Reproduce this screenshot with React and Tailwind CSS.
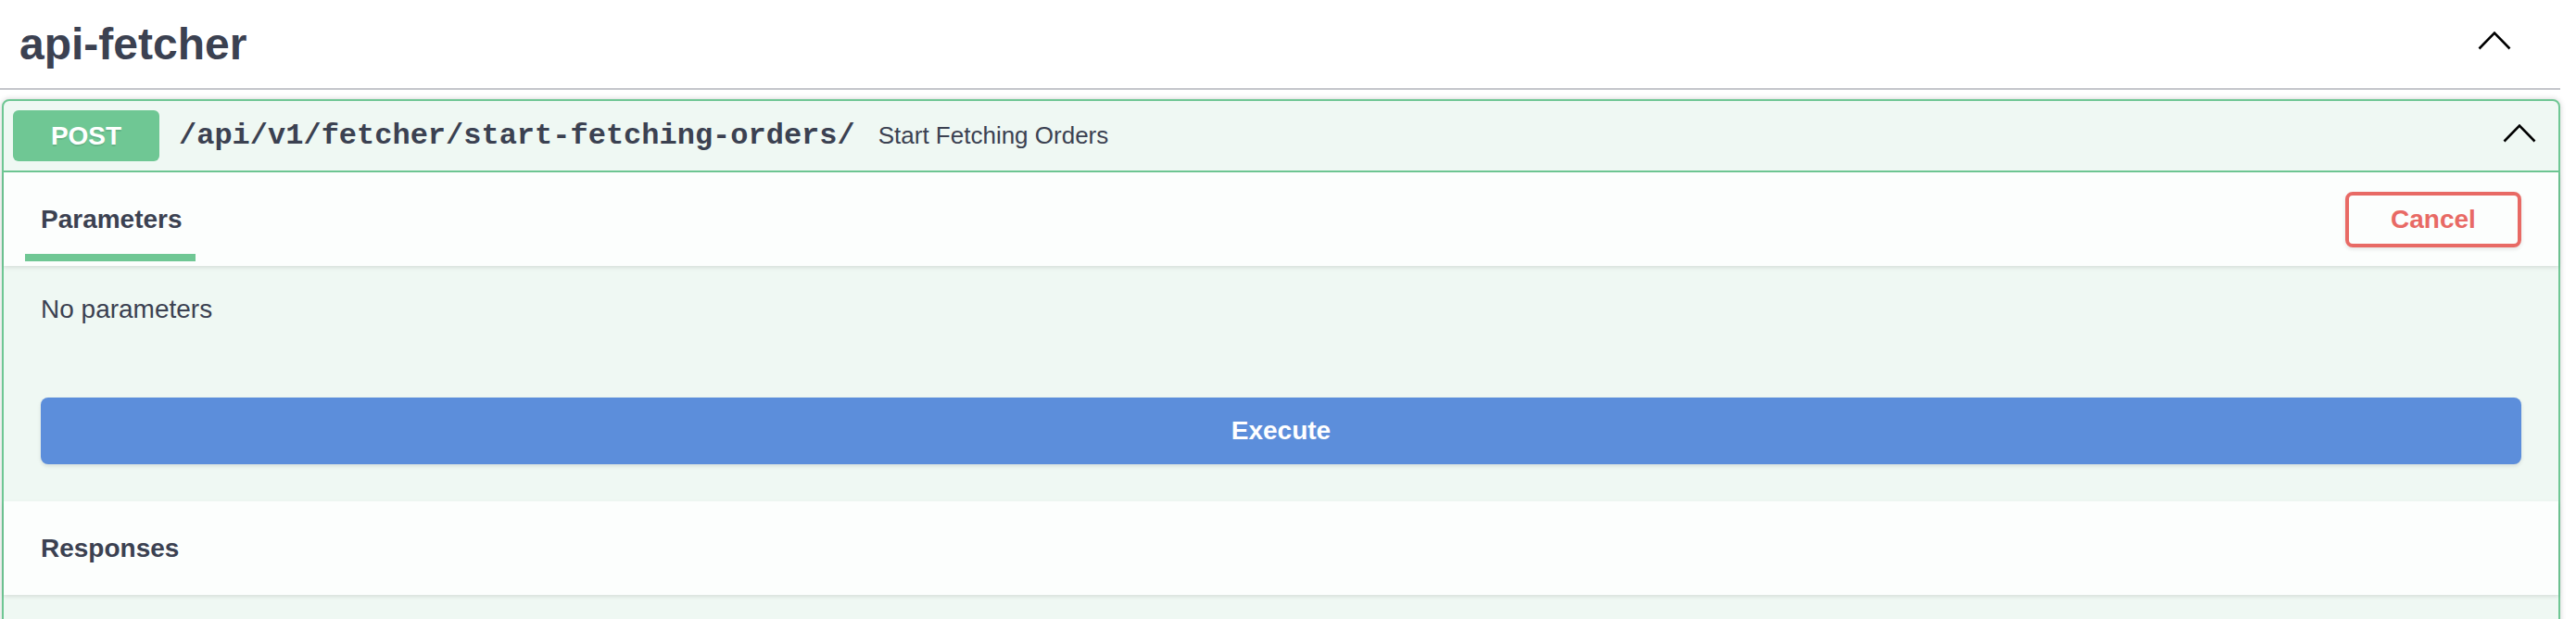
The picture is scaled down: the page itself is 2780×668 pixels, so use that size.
import React from "react";

const Chevron = ({ className }) => (
  <svg
    width="36"
    height="21"
    viewBox="0 0 36 21"
    fill="none"
    className={className}
  >
    <polyline
      points="1.5,19.5 18,2.5 34.5,19.5"
      stroke="#000"
      strokeWidth="2.6"
      strokeLinecap="butt"
      strokeLinejoin="miter"
    />
  </svg>
);

const SectionHeader = ({ children }) => (
  <div className="flex h-[101px] items-center justify-between bg-white/80 px-[40px] shadow-[0_2px_4px_rgba(0,0,0,0.1)]">
    {children}
  </div>
);

export default function App() {
  return (
    <div className="min-h-[668px] bg-white font-['Liberation_Sans',Arial,sans-serif] text-[#3b4151]">
      <div className="w-[2763px]">
        {/* TAG TITLE */}
        <div className="flex h-[97px] items-center justify-between border-b-2 border-[#c4c6cb] pl-[21px]">
          <h3 className="text-[48px] font-bold leading-none">api-fetcher</h3>
          <Chevron className="mr-[53px] mb-[9px]" />
        </div>

        {/* OPBLOCK */}
        <div className="ml-[2px] mt-[10px] rounded-[8px] border-2 border-[#6fc794] bg-[#eff8f3] shadow-[0_0_6px_rgba(0,0,0,0.19)]">
          {/* SUMMARY */}
          <div className="flex h-[77px] items-center border-b-2 border-[#6fc794] px-[10px]">
            <span className="flex h-[55px] w-[158px] items-center justify-center rounded-[6px] bg-[#6fc794] text-[28px] font-bold text-white [text-shadow:0_2px_0_rgba(0,0,0,0.1)]">
              POST
            </span>
            <span className="pl-[21px] pr-[25px] font-['Liberation_Mono',monospace] text-[32px] font-bold">
              /api/v1/fetcher/start-fetching-orders/
            </span>
            <span className="text-[26px]">Start Fetching Orders</span>
            <Chevron className="ml-auto mr-[14px] mb-[6px]" />
          </div>

          {/* PARAMETERS */}
          <SectionHeader>
            <div className="relative mt-[2px]">
              <span className="text-[28px] font-bold leading-[28px]">
                Parameters
              </span>
              <span className="absolute left-[-17px] top-[51px] h-[8px] w-[184px] bg-[#6fc794]" />
            </div>
            <button className="h-[60px] w-[190px] rounded-[8px] border-4 border-[#e86a65] text-[28px] font-bold text-[#e86a65] shadow-[0_2px_4px_rgba(0,0,0,0.1)]">
              Cancel
            </button>
          </SectionHeader>

          <div className="px-[40px] pt-[31px] pb-[40px]">
            <p className="text-[28px] leading-[32px]">No parameters</p>
            <button className="mt-[79px] flex h-[72px] w-full items-center justify-center rounded-[8px] bg-[#5c8edb] text-[28px] font-bold text-white shadow-[0_2px_4px_rgba(0,0,0,0.1)]">
              Execute
            </button>
          </div>

          {/* RESPONSES */}
          <SectionHeader>
            <span className="text-[28px] font-bold">Responses</span>
          </SectionHeader>
          <div className="h-[60px]" />
        </div>
      </div>
    </div>
  );
}
